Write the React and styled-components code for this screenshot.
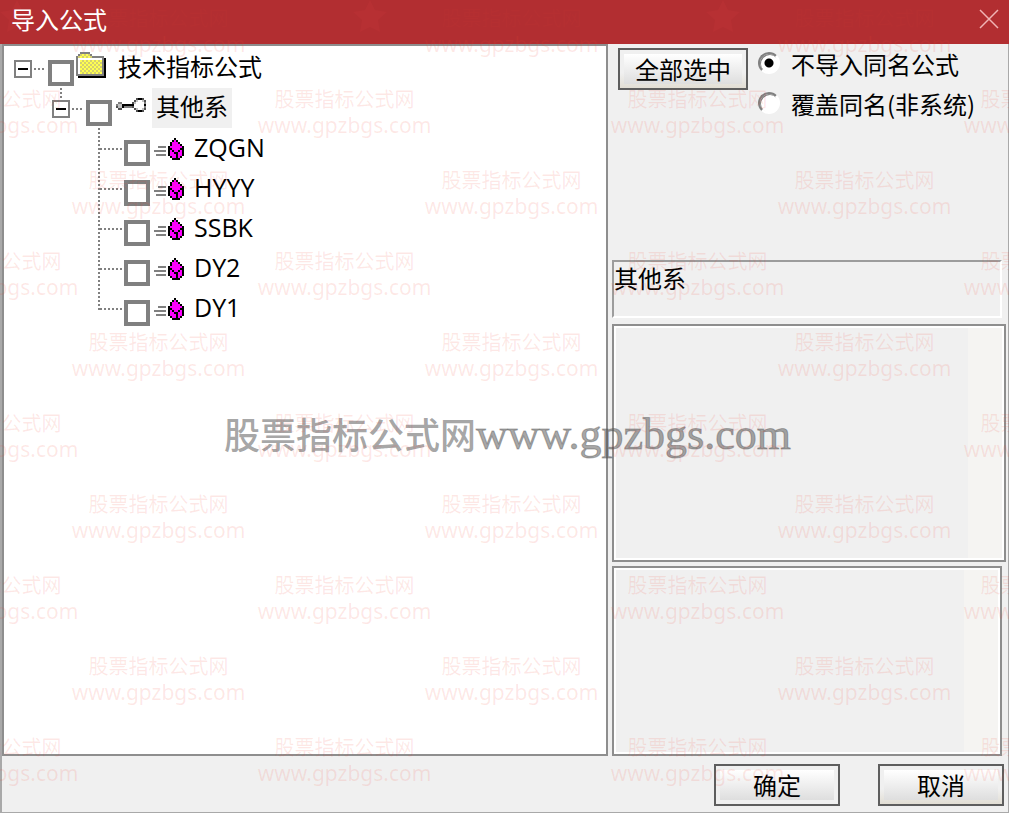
import { Fragment } from "react";
import styled, { createGlobalStyle } from "styled-components";

const formulas = ["ZQGN", "HYYY", "SSBK", "DY2", "DY1"];

const markRows = Array.from({ length: 10 }, (_, i) => i);

const palette = {
  K: "#000000",
  D: "#505050",
  G: "#808080",
  S: "#c0c0c0",
  Y: "#ffff50",
  O: "#d4d070",
  W: "#ffffff",
  M: "#ff00ff",
};

const folder = [
  "..GGGGG........",
  ".GOYOYOG.......",
  "GOYOYOYOGGGGGG.",
  "GWWWWWWWWWWWWGK",
  "GWYOYOYOYOYOYGK",
  "GWOYOYOYOYOYOGK",
  "GWYOYOYOYOYOYGK",
  "GWOYOYOYOYOYOGK",
  "GWYOYOYOYOYOYGK",
  "GWOYOYOYOYOYOGK",
  "GWYOYOYOYOYOYGK",
  "GGGGGGGGGGGGGGK",
  ".KKKKKKKKKKKKKK",
];

const key = [
  "..........DKKD.",
  ".........DS..SD",
  ".GG.....DS....G",
  "GSSKKKKKK.....K",
  "DSSKGGGGD.....G",
  ".DD......DS..SD",
  "..........DKKD.",
];

const cube = [
  "..........K....",
  ".........KMK...",
  "........KMMMK..",
  "........KMMMMK.",
  "..GGGG.KMMMMMMK",
  ".......KKMMMMKK",
  "GGGGGG.KMKMMKMK",
  ".......KMMKKMMK",
  ".GGGGG.KMMMKMMK",
  "........KMMKMK.",
  ".........KKKK..",
];

const PixelIcon = ({ rows }) => (
  <svg
    width={rows[0].length * 2}
    height={rows.length * 2}
    viewBox={`0 0 ${rows[0].length} ${rows.length}`}
    shapeRendering="crispEdges"
  >
    {rows.map((row, y) =>
      row
        .split("")
        .map((c, x) =>
          palette[c] ? (
            <rect key={`${x}-${y}`} x={x} y={y} width="1" height="1" fill={palette[c]} />
          ) : null
        )
    )}
  </svg>
);

const Star = () => (
  <svg width="34" height="32" viewBox="0 0 34 32">
    <path d="M17 0L22 10L34 12L25 20L27 32L17 27L7 32L9 20L0 12L12 10Z" fill="#c4353a" />
  </svg>
);

const TreeRow = ({ id, label, level, icon, expandable, selected }) => (
  <Row $level={level}>
    {expandable && (
      <Expander type="button" aria-label={`${label} 折叠`}>
        <span />
      </Expander>
    )}
    <Dots $wide={!expandable} />
    <CheckBox type="checkbox" id={id} />
    <IconSlot $level={level}>
      <PixelIcon rows={icon} />
    </IconSlot>
    <RowLabel htmlFor={id} $selected={selected} $leaf={level === 2}>
      {label}
    </RowLabel>
  </Row>
);

const App = () => {
  return (
    <Fragment>
      <GlobalStyle />
      <Dialog>
        <Watermark aria-hidden="true">
          {markRows.map((row) => (
            <MarkRow key={row} $odd={row % 2 === 1}>
              {[0, 1, 2, 3].map((col) => (
                <Mark key={col} $faint={row === 0}>
                  <p>股票指标公式网</p>
                  <span>www.gpzbgs.com</span>
                  {row === 0 && <Star />}
                </Mark>
              ))}
            </MarkRow>
          ))}
        </Watermark>

        <TitleBar>
          <h1>导入公式</h1>
          <CloseButton type="button" aria-label="关闭">
            <svg width="20" height="20" viewBox="0 0 20 20">
              <path d="M1 1L19 19M19 1L1 19" stroke="#f0b4b4" strokeWidth="1.5" />
            </svg>
          </CloseButton>
        </TitleBar>

        <Content>
          <Tree>
            <TreeRow id="root-node" label="技术指标公式" level={0} icon={folder} expandable />
            <Branch $level={0}>
              <TreeRow id="group-node" label="其他系" level={1} icon={key} expandable selected />
            </Branch>
            <Branch $level={1}>
              {formulas.map((name) => (
                <TreeRow key={name} id={name} label={name} level={2} icon={cube} />
              ))}
            </Branch>
          </Tree>

          <Side>
            <Options>
              <Button type="button" $wide $warm>
                全部选中
              </Button>
              <RadioList>
                <label>
                  <Radio type="radio" name="mode" defaultChecked />
                  不导入同名公式
                </label>
                <label>
                  <Radio type="radio" name="mode" />
                  覆盖同名(非系统)
                </label>
              </RadioList>
            </Options>
            <GroupName>其他系</GroupName>
            <TextPane aria-label="公式说明" readOnly $grow={238} />
            <TextPane aria-label="参数说明" readOnly $grow={190} $inset />
          </Side>
        </Content>

        <Footer>
          <Button type="button">确定</Button>
          <Button type="button" $warm>
            取消
          </Button>
        </Footer>

        <Banner>
          股票指标公式网<span>www.gpzbgs.com</span>
        </Banner>
      </Dialog>
    </Fragment>
  );
};

const GlobalStyle = createGlobalStyle`
  * {
    box-sizing: border-box;
    margin: 0;
    padding: 0;
  }

  body, button, input, textarea {
    font-family: "Noto Sans CJK SC", sans-serif;
    font-size: 24px;
    line-height: 40px;
    color: #000;
  }
`;

const Dialog = styled.main`
  position: relative;
  display: flex;
  flex-direction: column;
  min-height: 100vh;
  overflow: hidden;
  background: #f0f0f0;
`;

const TitleBar = styled.header`
  display: flex;
  align-items: center;
  justify-content: space-between;
  height: 44px;
  padding: 0 10px 6px 11px;
  background: #b22e31;

  h1 {
    position: relative;
    z-index: 2;
    font-size: 24px;
    font-weight: 400;
    line-height: 36px;
    color: #fff;
  }
`;

const CloseButton = styled.button`
  display: flex;
  border: 0;
  background: none;
`;

const Content = styled.div`
  flex: 1;
  display: grid;
  grid-template-columns: 606fr 394fr;
  gap: 4px;
  padding-right: 2px;
  border-left: 2px solid #a9a9a9;
  border-right: 1px solid #a9a9a9;
`;

const Tree = styled.section`
  padding: 2px 0;
  border: 2px solid #8e8e8e;
  background: #fff;
`;

const Row = styled.div`
  display: flex;
  height: 40px;
  padding-left: ${({ $level }) => ($level === 2 ? 94 : 10 + $level * 38)}px;
`;

const Branch = styled.div`
  position: relative;

  &::before {
    content: "";
    position: absolute;
    left: ${({ $level }) => 56 + $level * 38}px;
    top: 0;
    bottom: ${({ $level }) => ($level === 0 ? 28 : 18)}px;
    width: 2px;
    background: repeating-linear-gradient(#808080 0 2px, #fff 2px 4px);
  }
`;

const Expander = styled.button`
  display: flex;
  align-items: center;
  justify-content: center;
  width: 18px;
  height: 18px;
  margin-top: 12px;
  border: 2px solid #808080;
  background: #fff;

  span {
    width: 10px;
    height: 2px;
    background: #000;
  }
`;

const Dots = styled.span`
  width: ${({ $wide }) => ($wide ? 22 : 12)}px;
  height: 2px;
  margin: 20px 2px 0;
  background: repeating-linear-gradient(90deg, #808080 0 2px, #fff 2px 4px);
`;

const CheckBox = styled.input`
  appearance: none;
  width: 26px;
  height: 26px;
  margin-top: 12px;
  border: 4px solid #808080;
  background: #fff;

  &:checked {
    background: #333;
  }
`;

const IconSlot = styled.span`
  display: flex;
  align-items: center;
  width: 40px;
  height: ${({ $level }) => ($level === 2 ? 42 : 34)}px;
  padding-left: ${({ $level }) => ($level === 0 ? 2 : 4)}px;
`;

const RowLabel = styled.label`
  padding: 0 4px 2px;
  font-family: "Open Sans", "Noto Sans CJK SC", sans-serif;
  font-size: ${({ $leaf }) => ($leaf ? 25 : 24)}px;
  line-height: 38px;
  background: ${({ $selected }) => ($selected ? "#f0f0f0" : "transparent")};
`;

const Side = styled.section`
  display: flex;
  flex-direction: column;
`;

const Options = styled.div`
  display: flex;
  gap: 10px;
  height: 216px;
  padding: 4px 0 0 6px;
`;

const Button = styled.button`
  width: ${({ $wide }) => ($wide ? 130 : 126)}px;
  height: 42px;
  padding: 4px;
  border: 2px solid #5e5e5e;
  line-height: 28px;
  white-space: nowrap;
  background: linear-gradient(#fff, #dedede) content-box,
    ${({ $warm }) =>
      $warm ? "linear-gradient(#f0f0f0 60%, #e2ded4)" : "linear-gradient(#f0f0f0, #f0f0f0)"};
`;

const RadioList = styled.div`
  label {
    display: flex;
    gap: 11px;
    height: 40px;
    line-height: 32px;
    white-space: nowrap;
  }
`;

const Radio = styled.input`
  appearance: none;
  flex: none;
  width: 22px;
  height: 22px;
  margin-top: 4px;
  border: 2px solid;
  border-color: #808080 #fff #fff #808080;
  border-radius: 50%;
  background: #fff;
  box-shadow: inset 1px 1px 0 #808080;

  &:checked {
    background: radial-gradient(circle, #000 4px, #fff 5px);
  }
`;

const GroupName = styled.div`
  height: 58px;
  margin: 0 4px 6px 0;
  border: 2px solid;
  border-color: #9c9c9c #fff #fff #9c9c9c;
  line-height: 32px;
`;

const TextPane = styled.textarea`
  flex: ${({ $grow }) => $grow} 1 0;
  min-height: 100px;
  margin: 0 ${({ $inset }) => ($inset ? 4 : 0)}px ${({ $inset }) => ($inset ? 0 : 4)}px 0;
  border: 2px solid #8e8e8e;
  box-shadow: inset 0 0 0 2px #fff;
  background: linear-gradient(to left, #f5f4f2 36px, #f0f0f0 36px);
  outline: 0;
  resize: none;
`;

const Footer = styled.footer`
  display: flex;
  justify-content: flex-end;
  gap: 38px;
  height: 57px;
  padding: 8px 4px 0;
  border: solid #a9a9a9;
  border-width: 0 1px 1px 2px;
`;

const Watermark = styled.div`
  position: absolute;
  inset: 0;
  z-index: 1;
  overflow: hidden;
  pointer-events: none;
`;

const MarkRow = styled.div`
  display: flex;
  height: 81px;
  margin-left: ${({ $odd }) => ($odd ? -185 : -18)}px;
`;

const Mark = styled.div`
  position: relative;
  flex: none;
  width: 353px;
  padding-top: 4px;
  font-size: 20px;
  line-height: 27px;
  text-align: center;
  color: rgba(240, 70, 50, 0.12);

  p {
    opacity: ${({ $faint }) => ($faint ? 0.5 : 1)};
  }

  span {
    display: block;
    font-family: "Noto Sans", sans-serif;
    font-size: 21px;
  }

  svg {
    position: absolute;
    left: 18px;
    top: 0;
    opacity: 0.3;
  }
`;

const Banner = styled.div`
  position: absolute;
  left: 6px;
  right: 0;
  top: 406px;
  display: flex;
  align-items: baseline;
  justify-content: center;
  font-size: 36px;
  font-weight: 500;
  line-height: 54px;
  color: rgba(80, 80, 80, 0.52);
  white-space: nowrap;
  pointer-events: none;

  span {
    font-family: "Liberation Serif", serif;
    font-size: 44px;
    font-weight: 400;
    -webkit-text-stroke: 1px rgba(80, 80, 80, 0.4);
  }
`;

export default App;
